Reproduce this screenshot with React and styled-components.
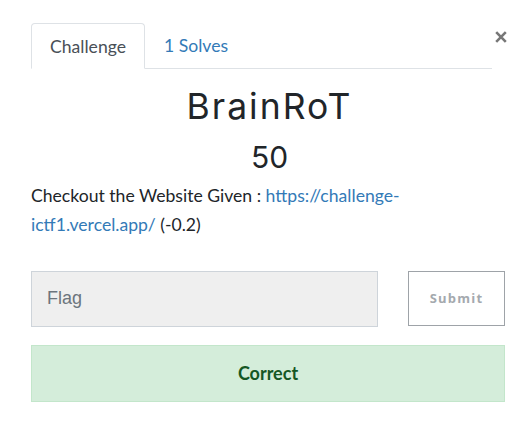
import React from 'react';
import styled, { createGlobalStyle } from 'styled-components';

const GlobalStyle = createGlobalStyle`
  body {
    margin: 0;
    background: #fff;
    font-family: Lato, "Noto Sans", sans-serif;
    color: #212529;
  }
`;

const Modal = styled.div`
  width: 527px;
  box-sizing: border-box;
  padding: 23px 19px 0 31px;
`;

const Header = styled.div`
  display: flex;
  align-items: flex-start;
`;

const Tabs = styled.ul`
  flex: 1;
  display: flex;
  margin: 0;
  padding: 0;
  list-style: none;
  border-bottom: 1px solid #dee2e6;
`;

const Tab = styled.li`
  height: 44px;
  box-sizing: border-box;
  padding: 0 18px;
  display: flex;
  align-items: center;
  font-size: 17.6px;
  margin-bottom: -1px;
  border: 1px solid transparent;
  border-radius: 4px 4px 0 0;
  color: #337ab7;

  ${({ active }) =>
    active &&
    `
    height: 46px;
    color: #495057;
    border-color: #dee2e6 #dee2e6 #fff;
    background: #fff;
  `}
`;

const Close = styled.button`
  margin: 7px 0 0 2px;
  padding: 0;
  border: 0;
  background: none;
  width: 14px;
  height: 14px;
  display: flex;
  align-items: center;
  justify-content: center;
  cursor: pointer;
`;

const Title = styled.h2`
  margin: 17px 0 0;
  text-align: center;
  font-family: Inter, "Open Sans", sans-serif;
  font-weight: 400;
  font-size: 35.5px;
  letter-spacing: 2px;
  line-height: 1.2;
  color: #212529;
`;

const Points = styled.h3`
  margin: 10px 0 0;
  text-align: center;
  font-family: Inter, "Open Sans", sans-serif;
  font-weight: 400;
  font-size: 30px;
  line-height: 1.2;
  color: #212529;
`;

const Description = styled.p`
  margin: 6px 0 0;
  font-size: 17.6px;
  line-height: 29px;
  width: 390px;

  a {
    color: #337ab7;
    text-decoration: none;
  }
`;

const SubmitRow = styled.div`
  display: flex;
  gap: 30px;
  margin-top: 32px;
`;

const FlagInput = styled.input`
  width: 347px;
  height: 56px;
  box-sizing: border-box;
  padding: 0 15px;
  background: #efefef;
  border: 1px solid #ced4da;
  font-family: "Liberation Sans", Arial, sans-serif;
  font-size: 18px;
  color: #495057;
  outline: none;

  &::placeholder {
    color: #6c757d;
  }
`;

const SubmitButton = styled.button`
  width: 97px;
  height: 55px;
  box-sizing: border-box;
  background: #fff;
  border: 1px solid #9ea3a8;
  color: #a4a9ae;
  font-family: "Open Sans", sans-serif;
  font-weight: 700;
  font-size: 13px;
  letter-spacing: 1.2px;
  cursor: pointer;
`;

const Alert = styled.div`
  margin-top: 18px;
  width: 474px;
  height: 57px;
  box-sizing: border-box;
  display: flex;
  align-items: center;
  justify-content: center;
  background: #d4edda;
  border: 1px solid #c3e6cb;
  color: #155724;
  font-weight: 700;
  font-size: 18px;
`;

export default function App() {
  return (
    <>
      <GlobalStyle />
      <Modal>
        <Header>
          <Tabs>
            <Tab active>Challenge</Tab>
            <Tab>1 Solves</Tab>
          </Tabs>
          <Close aria-label="Close">
            <svg width="12" height="12" viewBox="0 0 12 12">
              <path d="M1.2 1.2L10.8 10.8M10.8 1.2L1.2 10.8" stroke="#777" strokeWidth="2.6" />
            </svg>
          </Close>
        </Header>
        <Title>BrainRoT</Title>
        <Points>50</Points>
        <Description>
          Checkout the Website Given :{' '}
          <a href="#">https://challenge-ictf1.vercel.app/</a> (-0.2)
        </Description>
        <SubmitRow>
          <FlagInput placeholder="Flag" />
          <SubmitButton>Submit</SubmitButton>
        </SubmitRow>
        <Alert>Correct</Alert>
      </Modal>
    </>
  );
}
